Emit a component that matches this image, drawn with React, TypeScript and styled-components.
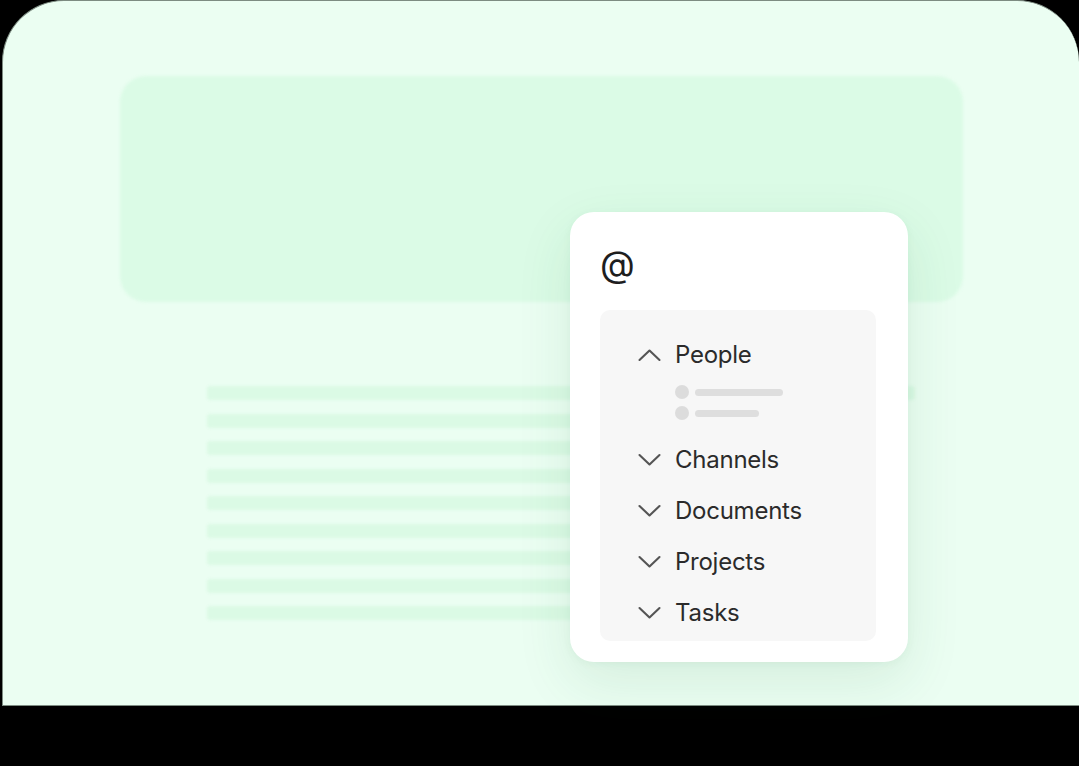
import styled, { createGlobalStyle } from "styled-components";

const GlobalStyle = createGlobalStyle`
  html, body {
    margin: 0;
    padding: 0;
    background: #000;
  }
  body {
    font-family: Inter, "Noto Sans", sans-serif;
  }
`;

const Screen = styled.div`
  width: 1079px;
  height: 766px;
  overflow: hidden;
  background: #000;
`;

const Frame = styled.div`
  position: relative;
  margin-left: 2px;
  width: 1077px;
  height: 706px;
  box-sizing: border-box;
  background: #ebfef2;
  border: 1px solid #7d8c82;
  border-right: none;
  border-radius: 62px 62px 0 0;
  padding: 75px 0 0 117px;
`;

const Banner = styled.div`
  width: 843px;
  height: 226px;
  background: #dbfbe6;
  border-radius: 26px;
  filter: blur(1.5px);
`;

const Lines = styled.div`
  display: flex;
  flex-direction: column;
  gap: 13.5px;
  margin: 84px 0 0 87px;
`;

const Line = styled.div<{ $w: number }>`
  width: ${(p) => p.$w}px;
  height: 14px;
  background: #dbfae5;
  border-radius: 3px;
  filter: blur(1.5px);
`;

const Card = styled.div`
  position: absolute;
  left: 567px;
  top: 211px;
  width: 338px;
  height: 450px;
  box-sizing: border-box;
  background: #fff;
  border-radius: 24px;
  padding: 0 32px 21px 30px;
  display: flex;
  flex-direction: column;
  box-shadow: 0 20px 55px rgba(40, 110, 60, 0.11), 0 2px 8px rgba(40, 110, 60, 0.05);
`;

const At = styled.div`
  height: 98px;
  box-sizing: border-box;
  padding-top: 32px;
  font-size: 36px;
  line-height: 40px;
  color: #1e1e1e;
  font-weight: 400;
`;

const Menu = styled.div`
  flex: 1;
  background: #f7f7f7;
  border-radius: 10px;
  padding: 19px 0 0 38px;
`;

const Row = styled.div`
  display: flex;
  align-items: center;
  gap: 14px;
  height: 51px;
  font-size: 24px;
  color: #2b2b2b;
  letter-spacing: -0.25px;
`;

const Chevron = styled.svg`
  width: 23px;
  height: 14px;
  flex: none;
`;

const Skeleton = styled.div`
  display: flex;
  flex-direction: column;
  gap: 7px;
  margin: 5px 0 14px 37px;
`;

const SkeletonRow = styled.div`
  display: flex;
  align-items: center;
  gap: 6px;
`;

const Dot = styled.div`
  width: 14px;
  height: 14px;
  border-radius: 50%;
  background: #dcdcdc;
`;

const Bar = styled.div<{ $w: number }>`
  width: ${(p) => p.$w}px;
  height: 7px;
  border-radius: 4px;
  background: #dedede;
`;

const ChevronIcon = ({ up }: { up?: boolean }) => (
  <Chevron viewBox="0 0 23 14">
    <path
      d={up ? "M1.5 12 L11.5 2.5 L21.5 12" : "M1.5 2 L11.5 11.5 L21.5 2"}
      fill="none"
      stroke="#555"
      strokeWidth="2.1"
      strokeLinecap="round"
      strokeLinejoin="round"
    />
  </Chevron>
);

const items = ["Channels", "Documents", "Projects", "Tasks"];

export default function App() {
  return (
    <Screen>
      <GlobalStyle />
      <Frame>
        <Banner />
        <Lines>
          {Array.from({ length: 9 }).map((_, i) => (
            <Line key={i} $w={i === 0 ? 708 : 690} />
          ))}
        </Lines>
        <Card>
          <At>@</At>
          <Menu>
            <Row>
              <ChevronIcon up />
              People
            </Row>
            <Skeleton>
              <SkeletonRow>
                <Dot />
                <Bar $w={88} />
              </SkeletonRow>
              <SkeletonRow>
                <Dot />
                <Bar $w={64} />
              </SkeletonRow>
            </Skeleton>
            {items.map((label) => (
              <Row key={label}>
                <ChevronIcon />
                {label}
              </Row>
            ))}
          </Menu>
        </Card>
      </Frame>
    </Screen>
  );
}
